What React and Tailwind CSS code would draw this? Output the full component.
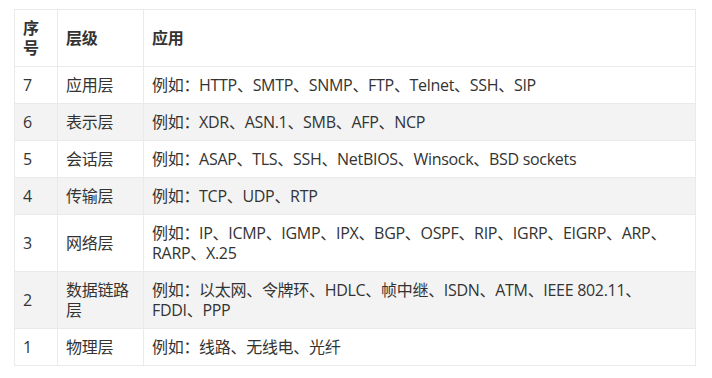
const rows = [
  { n: '7', layer: '应用层', app: '例如：HTTP、SMTP、SNMP、FTP、Telnet、SSH、SIP' },
  { n: '6', layer: '表示层', app: '例如：XDR、ASN.1、SMB、AFP、NCP' },
  { n: '5', layer: '会话层', app: '例如：ASAP、TLS、SSH、NetBIOS、Winsock、BSD sockets' },
  { n: '4', layer: '传输层', app: '例如：TCP、UDP、RTP' },
  { n: '3', layer: '网络层', app: '例如：IP、ICMP、IGMP、IPX、BGP、OSPF、RIP、IGRP、EIGRP、ARP、RARP、X.25' },
  { n: '2', layer: '数据链路层', app: '例如：以太网、令牌环、HDLC、帧中继、ISDN、ATM、IEEE 802.11、FDDI、PPP' },
  { n: '1', layer: '物理层', app: '例如：线路、无线电、光纤' },
];

export default function App() {
  return (
    <div
      lang="zh-CN"
      className="bg-white w-[712px] h-[378px] pt-[9px] pl-[14px] text-[16px] leading-[20px] tracking-[-0.3px] text-[#333]"
      style={{ fontFamily: '"Open Sans", "Noto Sans CJK SC", sans-serif' }}
    >
      <table className="table-fixed border-collapse w-[682px]">
        <colgroup>
          <col className="w-[43px]" />
          <col className="w-[86px]" />
          <col />
        </colgroup>
        <thead>
          <tr>
            <th className="border border-[#eaeaea] px-[8px] py-[8px] text-left align-middle font-bold">序号</th>
            <th className="border border-[#eaeaea] px-[8px] py-[8px] text-left align-middle font-bold">层级</th>
            <th className="border border-[#eaeaea] px-[8px] py-[8px] text-left align-middle font-bold">应用</th>
          </tr>
        </thead>
        <tbody>
          {rows.map((r, i) => (
            <tr key={r.n} className={i % 2 === 1 ? 'bg-[#f3f3f3]' : 'bg-white'}>
              <td className="border border-[#eaeaea] px-[8px] py-[8px] align-middle">{r.n}</td>
              <td className="border border-[#eaeaea] px-[8px] py-[8px] align-middle">{r.layer}</td>
              <td className="border border-[#eaeaea] px-[8px] py-[8px] align-middle">{r.app}</td>
            </tr>
          ))}
        </tbody>
      </table>
    </div>
  );
}
